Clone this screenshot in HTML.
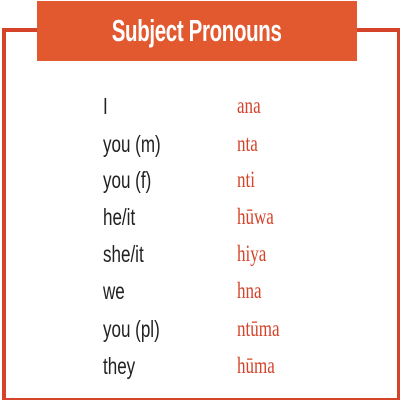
<!DOCTYPE html>
<html><head><style>
html,body{margin:0;padding:0;background:#fff;width:400px;height:400px;overflow:hidden;position:relative}
.frame{position:absolute;left:2px;top:28px;width:391px;height:366px;border:4px solid #d4432a;box-sizing:content-box}
.banner{position:absolute;left:37px;top:1px;width:320px;height:60px;background:#e2582f;color:#fff;font-family:"Liberation Sans",sans-serif;font-weight:bold;font-size:31px;line-height:60px;text-align:center;letter-spacing:-0.5px}
.banner span{display:inline-block;transform:scaleX(0.66)}
.l,.r{position:absolute;font-size:23px;line-height:22px;white-space:nowrap}
.l{left:103px;font-family:"Liberation Sans",sans-serif;color:#222;transform:scaleX(0.74);transform-origin:left}
.r{left:237px;font-family:"Liberation Serif",serif;color:#d4432a;transform:scaleX(0.74);transform-origin:left}
</style></head><body>
<div class="frame"></div>
<div class="banner"><span>Subject Pronouns</span></div>
<div class="l" style="top:95px">I</div><div class="r" style="top:95px">ana</div>
<div class="l" style="top:133px">you (m)</div><div class="r" style="top:133px">nta</div>
<div class="l" style="top:169px">you (f)</div><div class="r" style="top:169px">nti</div>
<div class="l" style="top:206px">he/it</div><div class="r" style="top:206px">hūwa</div>
<div class="l" style="top:243px">she/it</div><div class="r" style="top:243px">hiya</div>
<div class="l" style="top:280px">we</div><div class="r" style="top:280px">hna</div>
<div class="l" style="top:318px">you (pl)</div><div class="r" style="top:318px">ntūma</div>
<div class="l" style="top:355px">they</div><div class="r" style="top:355px">hūma</div>
</body></html>
